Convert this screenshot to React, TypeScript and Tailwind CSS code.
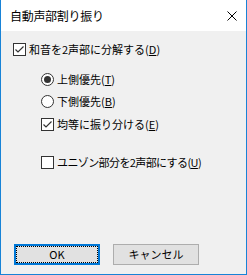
import React from 'react'

const font = { fontFamily: '"Yu Gothic UI", "Noto Sans CJK JP", "Liberation Sans", sans-serif' }

function Acc({ k }: { k: string }) {
  return (
    <>
      (<span className="underline underline-offset-1">{k}</span>)
    </>
  )
}

function CheckBox({ checked }: { checked?: boolean }) {
  return (
    <span className="w-[13px] h-[13px] border border-[#333] bg-white flex items-center justify-center shrink-0">
      {checked && (
        <svg width="11" height="11" viewBox="0 0 11 11">
          <path d="M1.5 5.5 L4 8 L9.5 2.5" fill="none" stroke="#333" strokeWidth="1.2" />
        </svg>
      )}
    </span>
  )
}

function Radio({ checked }: { checked?: boolean }) {
  return (
    <span className="w-[13px] h-[13px] rounded-full border border-[#333] bg-white flex items-center justify-center shrink-0">
      {checked && <span className="w-[7px] h-[7px] rounded-full bg-[#333]" />}
    </span>
  )
}

export default function App() {
  return (
    <div
      className="w-[247px] h-[275px] border-x border-b border-[#1883d7] bg-[#f0f0f0] flex flex-col text-[11px] leading-[13px] text-black"
      style={font}
    >
      {/* Title bar */}
      <div className="h-[31px] bg-white flex items-center justify-between pl-[9px] pr-[9px] shrink-0">
        <span className="text-[12px] tracking-[-0.3px]">自動声部割り振り</span>
        <svg width="10" height="10" viewBox="0 0 10 10">
          <path d="M0.5 0.5 L9.5 9.5 M9.5 0.5 L0.5 9.5" stroke="#000" strokeWidth="1" />
        </svg>
      </div>

      {/* Options */}
      <div className="flex flex-col pl-[12px]">
        <label className="flex items-center gap-[3px] mt-[12px]">
          <CheckBox checked />
          <span>和音を2声部に分解する<Acc k="D" /></span>
        </label>

        <div className="flex flex-col pl-[28px]">
          <label className="flex items-center gap-[3px] mt-[17px]">
            <Radio checked />
            <span>上側優先<Acc k="T" /></span>
          </label>
          <label className="flex items-center gap-[3px] mt-[9px]">
            <Radio />
            <span>下側優先<Acc k="B" /></span>
          </label>
          <label className="flex items-center gap-[3px] mt-[10px]">
            <CheckBox checked />
            <span>均等に振り分ける<Acc k="E" /></span>
          </label>
          <label className="flex items-center gap-[3px] mt-[25px]">
            <CheckBox />
            <span className="tracking-[-0.6px]">ユニゾン部分を2声部にする<Acc k="U" /></span>
          </label>
        </div>
      </div>

      {/* Buttons */}
      <div className="flex gap-[13px] pl-[13px] mt-[75px]">
        <button className="w-[86px] h-[21px] border-2 border-[#0078d7] bg-[#e1e1e1] p-0 flex">
          <span className="flex-1 border border-dotted border-black flex items-center justify-center">OK</span>
        </button>
        <button className="w-[86px] h-[21px] border border-[#adadad] bg-[#e1e1e1] flex items-center justify-center">
          キャンセル
        </button>
      </div>
    </div>
  )
}
